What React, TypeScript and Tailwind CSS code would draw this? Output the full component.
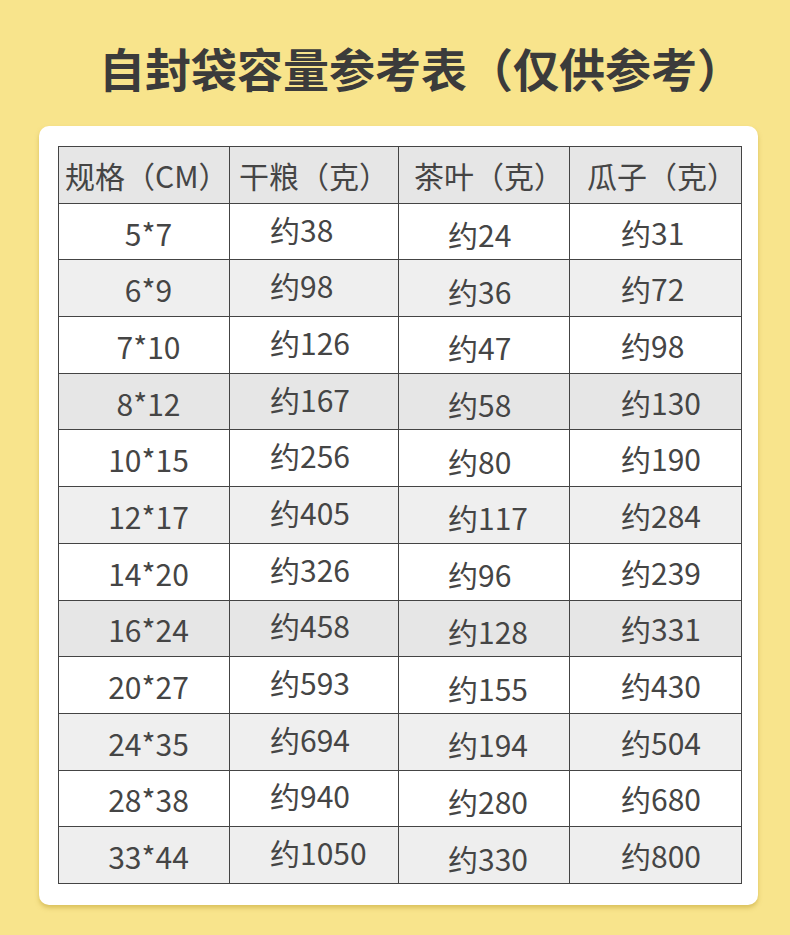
import React from 'react';

const rows: [string, string, string, string][] = [
  ['5*7', '约38', '约24', '约31'],
  ['6*9', '约98', '约36', '约72'],
  ['7*10', '约126', '约47', '约98'],
  ['8*12', '约167', '约58', '约130'],
  ['10*15', '约256', '约80', '约190'],
  ['12*17', '约405', '约117', '约284'],
  ['14*20', '约326', '约96', '约239'],
  ['16*24', '约458', '约128', '约331'],
  ['20*27', '约593', '约155', '约430'],
  ['24*35', '约694', '约194', '约504'],
  ['28*38', '约940', '约280', '约680'],
  ['33*44', '约1050', '约330', '约800'],
];

const rowBg = [
  'bg-white',
  'bg-[#efefef]',
  'bg-white',
  'bg-[#e6e6e6]',
  'bg-white',
  'bg-[#efefef]',
  'bg-white',
  'bg-[#e6e6e6]',
  'bg-white',
  'bg-[#efefef]',
  'bg-white',
  'bg-[#eeeeee]',
];

const font = { fontFamily: '"Noto Sans CJK SC", "Noto Sans", sans-serif' };

export default function App() {
  return (
    <div className="w-[790px] h-[935px] bg-[#f8e48c] pt-[37px]" style={font}>
      <h1 className="pl-[99px] text-[46px] leading-[60px] font-bold text-[#3b3b3b]">
        自封袋容量参考表（仅供参考）
      </h1>

      <div className="mt-[29px] mx-[39px] w-[719px] bg-white rounded-[10px] pt-[20px] pb-[21px] pl-[19px] pr-[17px] shadow-[0_3px_4px_rgba(190,160,50,0.5)]">
        <table className="w-[683px] border-collapse table-fixed text-[#454545] text-[30px]">
          <colgroup>
            <col className="w-[171px]" />
            <col className="w-[169px]" />
            <col className="w-[171px]" />
            <col className="w-[172px]" />
          </colgroup>
          <thead>
            <tr className="bg-[#e6e6e6] h-[56.7px]">
              <th className="border border-[#444] font-normal text-left pl-[6px] leading-none whitespace-nowrap">规格（CM）</th>
              <th className="border border-[#444] font-normal text-left pl-[9px] leading-none whitespace-nowrap">干粮（克）</th>
              <th className="border border-[#444] font-normal text-left pl-[15px] leading-none whitespace-nowrap">茶叶（克）</th>
              <th className="border border-[#444] font-normal text-left pl-[17px] leading-none whitespace-nowrap">瓜子（克）</th>
            </tr>
          </thead>
          <tbody>
            {rows.map((r, i) => (
              <tr key={r[0]} className={`${rowBg[i]} h-[56.7px]`}>
                <td className="border border-[#444] text-center pl-[9px] leading-none pt-[2px]">{r[0]}</td>
                <td className="border border-[#444] text-left pl-[40px] leading-none pb-[6px]">{r[1]}</td>
                <td className="border border-[#444] text-left pl-[49px] leading-none pt-[5px]">{r[2]}</td>
                <td className="border border-[#444] text-left pl-[51px] leading-none">{r[3]}</td>
              </tr>
            ))}
          </tbody>
        </table>
      </div>
    </div>
  );
}
